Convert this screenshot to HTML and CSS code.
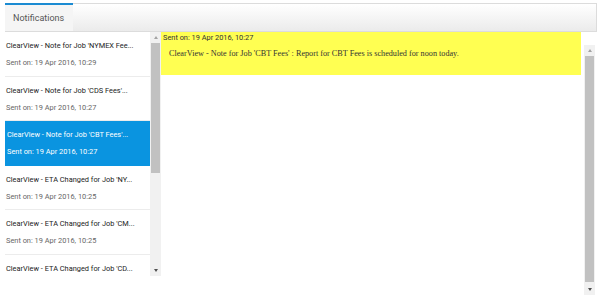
FILE: index.html
```html
<!DOCTYPE html>
<html lang="en">
<head>
  <meta charset="UTF-8" />
  <title>Notifications</title>
  <link rel="stylesheet" href="styles.css">
</head>
<body>
  <div class="page">
    <div class="tabbar">
      <div class="tab">Notifications</div>
    </div>

    <div class="content">
      <div class="left">
        <ul class="list">
          <li class="item">
            <div class="title">ClearView - Note for Job 'NYMEX Fee...</div>
            <div class="date">Sent on: 19 Apr 2016, 10:29</div>
          </li>
          <li class="item">
            <div class="title">ClearView - Note for Job 'CDS Fees'...</div>
            <div class="date">Sent on: 19 Apr 2016, 10:27</div>
          </li>
          <li class="item selected">
            <div class="title">ClearView - Note for Job 'CBT Fees'...</div>
            <div class="date">Sent on: 19 Apr 2016, 10:27</div>
          </li>
          <li class="item">
            <div class="title">ClearView - ETA Changed for Job 'NY...</div>
            <div class="date">Sent on: 19 Apr 2016, 10:25</div>
          </li>
          <li class="item">
            <div class="title">ClearView - ETA Changed for Job 'CM...</div>
            <div class="date">Sent on: 19 Apr 2016, 10:25</div>
          </li>
          <li class="item">
            <div class="title">ClearView - ETA Changed for Job 'CD...</div>
          </li>
        </ul>
        <div class="scroll left-scroll">
          <span class="arrow up"></span>
          <div class="track"><div class="thumb left-thumb"></div></div>
          <span class="arrow down"></span>
        </div>
      </div>

      <div class="right">
        <div class="detail">
          <div class="message">
            <div class="sent">Sent on: 19 Apr 2016, 10:27</div>
            <p class="body">ClearView - Note for Job 'CBT Fees' : Report for CBT Fees is scheduled for noon today.</p>
          </div>
        </div>
        <div class="scroll right-scroll">
          <span class="arrow up"></span>
          <div class="track"><div class="thumb right-thumb"></div></div>
          <span class="arrow down"></span>
        </div>
      </div>
    </div>
  </div>
</body>
</html>
```

FILE: styles.css
```css
/* General Styling */
body {
  margin: 0;
  background: #fff;
  font-family: Roboto, "Liberation Sans", sans-serif;
}
.page {
  width: 600px;
  height: 298px;
  display: flex;
  flex-direction: column;
}
.tabbar {
  margin: 3px 3px 0 5px;
  height: 29px;
  display: flex;
  background: linear-gradient(#ffffff, #ebebeb);
  border: 1px solid #dcdcdc;
  border-left: none;
  box-sizing: border-box;
}
.tab {
  width: 68px;
  margin-top: -1px;
  background: #f5f5f5;
  border-top: 2px solid #1b8bd2;
  color: #555;
  font-size: 9px;
  padding: 8px 0 0 8px;
  box-sizing: border-box;
}
.content {
  flex: 1;
  display: flex;
}

/* Left list */
.left {
  width: 161px;
  height: 244px;
  display: flex;
}
.list {
  list-style: none;
  margin: 0;
  padding: 0 0 0 5px;
  width: 150px;
  box-sizing: border-box;
  overflow: hidden;
}
.item {
  height: 44.5px;
  padding: 9px 0 0 1px;
  box-sizing: border-box;
  border-bottom: 1px solid #ececec;
}
.title {
  font-size: 7.4px;
  color: #222;
  white-space: nowrap;
}
.date {
  font-size: 7.4px;
  color: #666;
  margin-top: 8px;
}
.item.selected {
  background: #0a94e0;
  border-bottom-color: #0a94e0;
  padding-left: 2px;
}
.item.selected .title,
.item.selected .date {
  color: #fff;
}

/* Fake scrollbars */
.scroll {
  width: 11px;
  display: flex;
  flex-direction: column;
  background: #f1f1f1;
}
.track {
  flex: 1;
  position: relative;
}
.thumb {
  position: absolute;
  left: 1px;
  right: 1px;
  background: #c1c1c1;
}
.left-thumb {
  top: 0;
  height: 130px;
}
.right-thumb {
  top: 0;
  bottom: 2px;
}
.arrow {
  height: 11px;
  display: flex;
  align-items: center;
  justify-content: center;
}
.arrow::before {
  content: "";
  border-left: 2.5px solid transparent;
  border-right: 2.5px solid transparent;
}
.arrow.up::before {
  border-bottom: 3px solid #a3a3a3;
}
.arrow.down::before {
  border-top: 3px solid #505050;
}

/* Right detail */
.right {
  flex: 1;
  display: flex;
  padding-right: 5px;
}
.detail {
  flex: 1;
}
.message {
  background: #ffff52;
  height: 43px;
  margin-right: 3px;
  padding: 1px 0 0 2px;
  box-sizing: border-box;
}
.sent {
  font-size: 7.4px;
  color: #333;
}
.body {
  margin: 7px 0 0 6px;
  font-family: "Liberation Serif", serif;
  font-size: 8.2px;
  color: #333;
}
.right-scroll {
  margin-top: 13px;
  margin-bottom: 3px;
}
```
